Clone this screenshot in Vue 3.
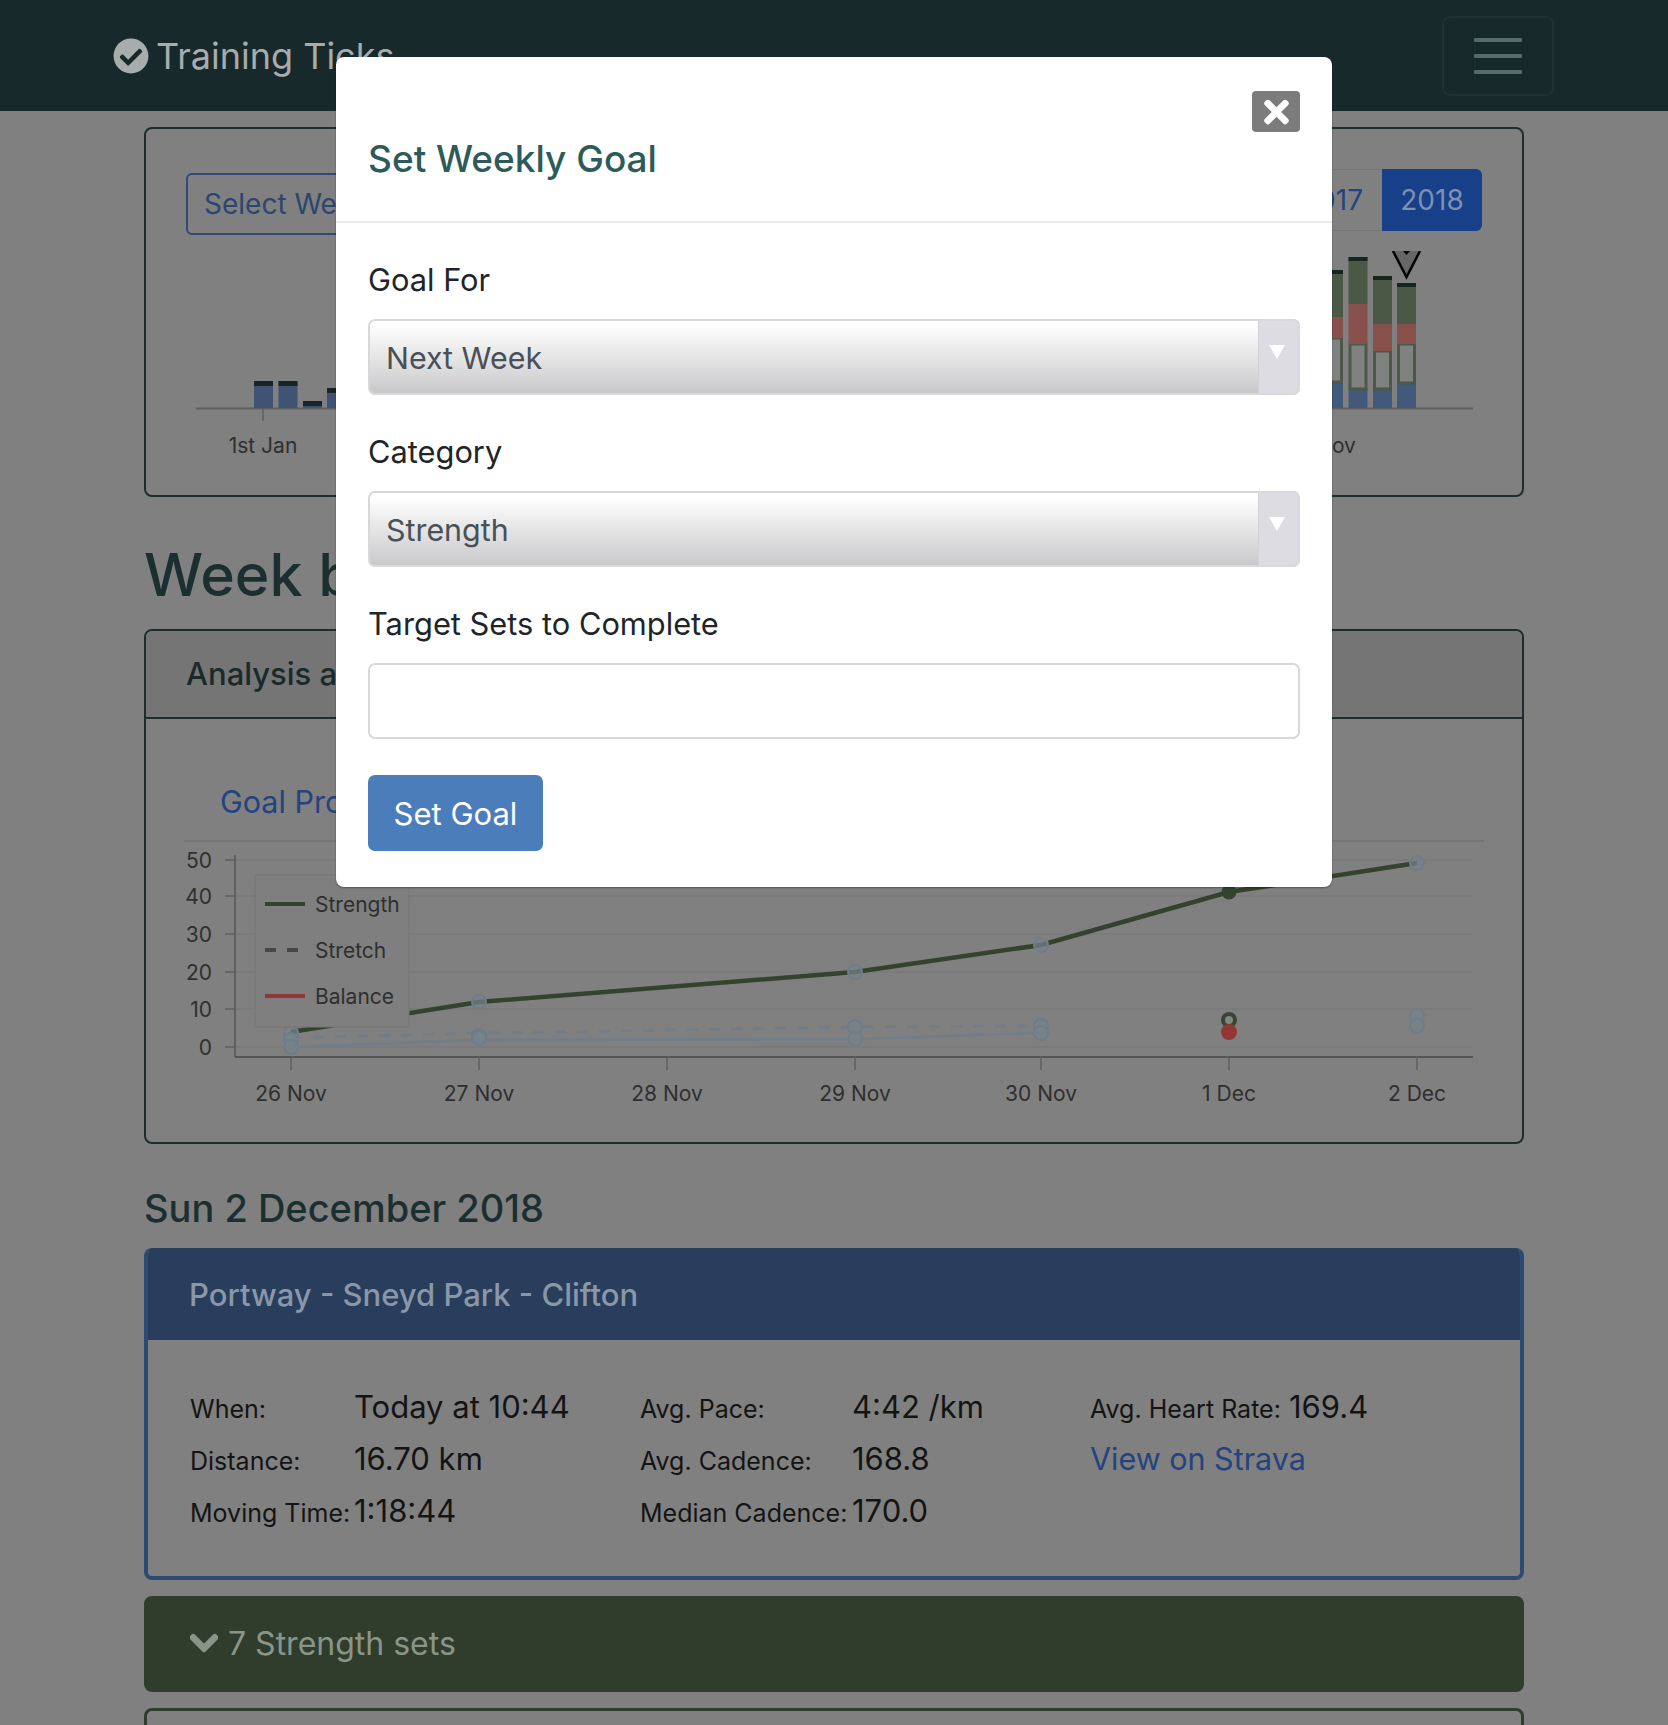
<script setup>
const legend = [
  { label: 'Strength', y: 904, color: '#33432d', dash: '' },
  { label: 'Stretch', y: 950, color: '#454a45', dash: '11 11' },
  { label: 'Balance', y: 996, color: '#923733', dash: '' }
]
const yTicks = [
  { label: '50', y: 860 }, { label: '40', y: 896 }, { label: '30', y: 934 },
  { label: '20', y: 972 }, { label: '10', y: 1009 }, { label: '0', y: 1047 }
]
const xTicks = [
  { label: '26 Nov', x: 291 }, { label: '27 Nov', x: 479 }, { label: '28 Nov', x: 667 },
  { label: '29 Nov', x: 855 }, { label: '30 Nov', x: 1041 }, { label: '1 Dec', x: 1229 }, { label: '2 Dec', x: 1417 }
]
const leftBars = [
  { x: 254, top: 380 }, { x: 278.5, top: 380 }, { x: 303, top: 400 }, { x: 327, top: 387 }
]
const rightBars = [
  { x: 1324, top: 269, g: 316, r: 337, w: 381 },
  { x: 1348.5, top: 256, g: 303, r: 343, w: 388 },
  { x: 1373, top: 275, g: 323, r: 350, w: 388 },
  { x: 1397, top: 282, g: 323, r: 343, w: 382 }
]
const faintDots = [
  [291, 1033], [291, 1040], [291, 1047], [479, 1002], [479, 1036], [479, 1038],
  [855, 972], [855, 1027], [855, 1039], [1041, 945], [1041, 1026], [1041, 1033],
  [1417, 863], [1417, 1016], [1417, 1026]
]
const stats = [
  { cols: '164px 1fr', rows: [['When:', 'Today at 10:44'], ['Distance:', '16.70 km'], ['Moving Time:', '1:18:44']] },
  { cols: '212px 1fr', rows: [['Avg. Pace:', '4:42 /km'], ['Avg. Cadence:', '168.8'], ['Median Cadence:', '170.0']] },
  { cols: '199px 1fr', rows: [['Avg. Heart Rate:', '169.4']], link: 'View on Strava' }
]
</script>

<template>
  <div class="page">
    <nav class="navbar">
      <div class="brand">
        <svg class="brand-icon" viewBox="0 0 512 512"><path fill="currentColor" d="M504 256c0 136.967-111.033 248-248 248S8 392.967 8 256 119.033 8 256 8s248 111.033 248 248zM227.314 387.314l184-184c6.248-6.248 6.248-16.379 0-22.627l-22.627-22.627c-6.248-6.249-16.379-6.249-22.628 0L216 308.118l-70.059-70.059c-6.248-6.248-16.379-6.248-22.628 0l-22.627 22.627c-6.248 6.248-6.248 16.379 0 22.627l104 104c6.249 6.249 16.379 6.249 22.628.001z"/></svg>
        <span>Training Ticks</span>
      </div>
      <div class="toggler"><i></i><i></i><i></i></div>
    </nav>

    <main class="main">
      <section class="card year-card">
        <div class="year-top">
          <div class="select-week">Select Week</div>
          <div class="years"><span class="year">2017</span><span class="year active">2018</span></div>
        </div>
        <svg class="year-chart" width="1376" height="240" viewBox="146 245 1376 240">
          <line x1="196" y1="407.5" x2="1473" y2="407.5" stroke="#5f5f5f" stroke-width="2"/>
          <line x1="263" y1="408" x2="263" y2="420" stroke="#5f5f5f" stroke-width="1.5"/>
          <g v-for="b in leftBars" :key="b.x">
            <rect :x="b.x" :y="b.top" width="19" :height="407 - b.top" fill="#405373"/>
            <rect :x="b.x" :y="b.top" width="19" height="5" fill="#182428"/>
          </g>
          <g v-for="b in rightBars" :key="b.x">
            <rect :x="b.x" :y="b.w" width="19" :height="407 - b.w" fill="#43597b"/>
            <rect :x="b.x + 1.5" :y="b.r" width="16" :height="b.w - b.r" fill="#7f827f" stroke="#4d574a" stroke-width="3"/>
            <rect :x="b.x" :y="b.g" width="19" :height="b.r - b.g" fill="#87504a"/>
            <rect :x="b.x" :y="b.top" width="19" :height="b.g - b.top" fill="#4a5845"/>
            <rect :x="b.x" :y="b.top" width="19" height="4" fill="#182420"/>
          </g>
          <path d="M1393 250 L1406.5 276 L1420 250" fill="#666" stroke="#000" stroke-width="2.5"/>
          <rect x="1388" y="245" width="38" height="5" fill="#808080"/>
          <path d="M1403 250 L1406.5 254 L1410 250Z" fill="#000"/>
          <text class="axis-text" x="263" y="452" text-anchor="middle">1st Jan</text>
          <text class="axis-text" x="1336" y="452" text-anchor="middle">Nov</text>
        </svg>
      </section>

      <h1 class="week-title">Week beginning</h1>

      <section class="card analysis">
        <header class="analysis-head">Analysis and Goals</header>
        <div class="tabs"><span class="tab">Goal Progress</span></div>
        <svg class="goal-chart" width="1376" height="270" viewBox="146 843 1376 270">
          <line v-for="t in yTicks" :key="t.y" x1="235" :y1="t.y" x2="1472" :y2="t.y" stroke="#7a7a7a" stroke-width="1.5"/>
          <line x1="235" y1="855" x2="235" y2="1057" stroke="#565656" stroke-width="1.5"/>
          <line x1="235" y1="1057" x2="1473" y2="1057" stroke="#565656" stroke-width="2"/>
          <g v-for="t in yTicks" :key="'y' + t.y">
            <line x1="225" :y1="t.y" x2="235" :y2="t.y" stroke="#5f5f5f" stroke-width="1.5"/>
            <text class="axis-text" x="212" :y="t.y + 8" text-anchor="end">{{ t.label }}</text>
          </g>
          <g v-for="t in xTicks" :key="t.x">
            <line :x1="t.x" y1="1057" :x2="t.x" y2="1070" stroke="#5f5f5f" stroke-width="1.5"/>
            <text class="axis-text" :x="t.x" y="1101" text-anchor="middle">{{ t.label }}</text>
          </g>
          <polyline points="291,1038 479,1033 855,1027 1041,1026" fill="none" stroke="#727d88" stroke-width="3" stroke-dasharray="11 11"/>
          <polyline points="291,1047 479,1040 855,1039 1041,1033" fill="none" stroke="#727d88" stroke-width="3"/>
          <polyline points="291,1032 479,1002 855,972 1041,945 1229,892 1417,863" fill="none" stroke="#33432d" stroke-width="4.5"/>
          <circle v-for="(d, i) in faintDots" :key="i" :cx="d[0]" :cy="d[1]" r="7" fill="#78838c" fill-opacity="0.7" stroke="#6f7d89" stroke-width="2"/>
          <circle cx="1229" cy="892" r="7.5" fill="#33432d"/>
          <circle cx="1229" cy="1020" r="6" fill="#808580" stroke="#3a4436" stroke-width="4"/>
          <circle cx="1229" cy="1032" r="8" fill="#923733"/>
          <rect x="255" y="875" width="154" height="152" fill="#7f7f7f" stroke="#777" stroke-width="1"/>
          <g v-for="l in legend" :key="l.label">
            <line x1="265" :y1="l.y" x2="305" :y2="l.y" :stroke="l.color" stroke-width="4" :stroke-dasharray="l.dash"/>
            <text class="axis-text" x="315" :y="l.y + 8">{{ l.label }}</text>
          </g>
        </svg>
      </section>

      <h2 class="day-title">Sun 2 December 2018</h2>

      <section class="activity">
        <header class="activity-head">Portway - Sneyd Park - Clifton</header>
        <div class="activity-body">
          <div v-for="(g, gi) in stats" :key="gi" class="stat-col" :style="{ gridTemplateColumns: g.cols }">
            <template v-for="r in g.rows" :key="r[0]">
              <span class="stat-label">{{ r[0] }}</span>
              <span class="stat-value">{{ r[1] }}</span>
            </template>
            <span v-if="g.link" class="stat-link">{{ g.link }}</span>
          </div>
        </div>
      </section>

      <section class="sets">
        <svg class="chevron" viewBox="0 0 448 512"><path fill="currentColor" stroke="currentColor" stroke-width="28" d="M207.029 381.476L12.686 187.132c-9.373-9.373-9.373-24.569 0-33.941l22.667-22.667c9.357-9.357 24.522-9.375 33.901-.04L224 284.505l154.745-154.021c9.379-9.335 24.544-9.317 33.901.04l22.667 22.667c9.373 9.373 9.373 24.569 0 33.941L240.971 381.476c-9.373 9.372-24.569 9.372-33.942 0z"/></svg>
        <span>7 Strength sets</span>
      </section>
      <section class="next-card"></section>
    </main>

    <div class="modal">
      <header class="modal-head">
        <button class="close" type="button" aria-label="Close">
          <svg viewBox="0 0 352 512"><path fill="currentColor" d="M242.72 256l100.07-100.07c12.28-12.28 12.28-32.19 0-44.48l-22.24-22.24c-12.28-12.28-32.19-12.28-44.48 0L176 189.28 75.93 89.21c-12.28-12.28-32.19-12.28-44.48 0L9.21 111.45c-12.28 12.28-12.28 32.19 0 44.48L109.28 256 9.21 356.07c-12.28 12.28-12.28 32.19 0 44.48l22.24 22.24c12.28 12.28 32.2 12.28 44.48 0L176 322.72l100.07 100.07c12.28 12.28 32.2 12.28 44.48 0l22.24-22.24c12.28-12.28 12.28-32.19 0-44.48L242.72 256z"/></svg>
        </button>
        <h5 class="modal-title">Set Weekly Goal</h5>
      </header>
      <form class="modal-body" @submit.prevent>
        <label class="field-label">Goal For</label>
        <div class="select-wrap">
          <select class="field select"><option>Next Week</option><option>This Week</option></select>
          <span class="select-arrow"><i></i></span>
        </div>
        <label class="field-label">Category</label>
        <div class="select-wrap">
          <select class="field select"><option>Strength</option><option>Stretch</option><option>Balance</option></select>
          <span class="select-arrow"><i></i></span>
        </div>
        <label class="field-label">Target Sets to Complete</label>
        <input class="field input" type="text" />
        <button class="submit" type="submit">Set Goal</button>
      </form>
    </div>
  </div>
</template>

<style>
html, body { margin: 0; padding: 0; background: #808080; }
</style>

<style scoped>
.page {
  position: relative;
  height: 1725px;
  overflow: hidden;
  background: #808080;
  color: #111;
  font-family: Inter, "Liberation Sans", sans-serif;
  font-size: 30px;
}
.navbar {
  height: 111px;
  background: #18292b;
  display: flex;
  align-items: center;
  justify-content: space-between;
  padding: 0 114px 0 113px;
  box-sizing: border-box;
}
.brand { display: flex; align-items: center; gap: 7px; color: #a7acac; font-size: 36px; }
.brand-icon { width: 36px; height: 36px; display: block; }
.toggler {
  width: 112px; height: 80px; box-sizing: border-box;
  border: 2px solid #1f3133; border-radius: 8px;
  display: flex; flex-direction: column; align-items: center; justify-content: center; gap: 12px;
}
.toggler i { display: block; width: 48px; height: 4px; background: #566a6b; border-radius: 1px; }
.main { padding: 16px 144px 0; }
.card { border: 2px solid #1e2c2d; border-radius: 8px; box-sizing: border-box; }
.year-card { height: 370px; padding: 40px 40px 0; }
.year-top { display: flex; justify-content: space-between; align-items: flex-start; }
.select-week {
  margin-top: 4px; width: 200px; height: 62px; box-sizing: border-box; padding: 0 16px;
  border: 2px solid #2f4a73; border-radius: 6px; color: #2c4670; line-height: 58px; font-size: 28px; white-space: nowrap;
}
.years { display: flex; height: 62px; }
.year { width: 100px; line-height: 60px; text-align: center; color: #234481; font-size: 28px; border: 1px solid #767676; border-width: 1px 0; box-sizing: border-box; }
.year.active { background: #174089; color: #7c90b3; border: 0; line-height: 62px; border-radius: 0 6px 6px 0; }
.year-chart { display: block; margin: 11px 0 0 -40px; }
.axis-text { font-size: 21px; fill: #2f2f2f; font-family: Inter, "Liberation Sans", sans-serif; }
.week-title {
  margin: 37px 0 0; height: 95px; line-height: 82px; font-size: 59px; font-weight: 500; color: #1c2f30; white-space: nowrap;
}
.analysis { height: 515px; overflow: hidden; }
.analysis-head { height: 86px; line-height: 86px; padding-left: 40px; background: #757575; border-bottom: 2px solid #1e2c2d; font-size: 31px; font-weight: 500; color: #1a2a2b; }
.tabs { margin: 0 38px; height: 123px; border-bottom: 2px solid #757575; box-sizing: border-box; padding: 58px 0 0 36px; }
.tab { color: #234481; font-size: 30.5px; line-height: 50px; }
.goal-chart { display: block; margin-top: 1px; }
.day-title { margin: 39px 0 0; height: 65px; line-height: 50px; font-size: 38px; font-weight: 500; color: #1c2f30; }
.activity { border: 4px solid #2d4a75; border-top: 0; border-radius: 8px; box-sizing: border-box; height: 332px; overflow: hidden; }
.activity-head { height: 92px; margin: 0 -4px; line-height: 94px; padding-left: 45px; background: #283e5c; color: #8a97a8; font-size: 31px; font-weight: 500; }
.activity-body { display: grid; grid-template-columns: 450px 450px 1fr; padding: 48px 0 0 42px; }
.stat-col { display: grid; grid-auto-rows: 52px; align-items: baseline; align-content: start; }
.stat-label { font-size: 25px; color: #141414; white-space: nowrap; }
.stat-value { font-size: 31px; color: #141414; white-space: nowrap; }
.stat-link { grid-column: 1 / -1; font-size: 30.5px; color: #234481; }
.sets {
  margin-top: 16px; height: 96px; border-radius: 8px; background: #303d2d; color: #8a958a;
  display: flex; align-items: center; gap: 9px; padding: 0 0 2px 45px; box-sizing: border-box; font-size: 32px;
}
.chevron { width: 28px; height: 32px; display: block; margin-left: 1px; margin-right: 1px; }
.next-card { margin-top: 16px; height: 100px; border: 3px solid #2b3f2a; border-radius: 8px; }
.modal {
  position: absolute; left: 336px; top: 57px; width: 996px; height: 830px;
  background: #fff; border-radius: 8px; box-shadow: 0 1px 2px rgba(0, 0, 0, .35);
}
.modal-head { height: 166px; box-sizing: border-box; border-bottom: 2px solid #e9ecef; padding: 34px 32px 0; display: flex; flex-direction: column; align-items: flex-start; }
.close {
  align-self: flex-end; width: 48px; height: 41px; padding: 0; border: 0; border-radius: 4px;
  background: #7c7c7c; color: #fff; display: flex; align-items: center; justify-content: center;
}
.close svg { width: 25px; height: 36px; display: block; }
.modal-title { margin: 5px 0 0; font-size: 37px; line-height: 44px; font-weight: 500; color: #2d5a5a; }
.modal-body { padding: 35px 32px 0; display: flex; flex-direction: column; align-items: flex-start; }
.field-label { display: block; height: 61px; line-height: 44px; font-size: 30.8px; color: #212529; }
.select-wrap { position: relative; width: 932px; height: 76px; margin-bottom: 35px; }
.field { display: block; box-sizing: border-box; width: 932px; height: 76px; border: 2px solid #d8d8d8; border-radius: 7px; font-family: inherit; font-size: 30.4px; color: #495057; }
.select {
  appearance: none; -webkit-appearance: none; padding: 2px 60px 0 16px;
  background: linear-gradient(#fff 5%, #c9c9cb 100%);
}
.select-arrow {
  position: absolute; right: 0; top: 0; width: 42px; height: 76px; background: #dcdce2;
  border-radius: 0 7px 7px 0; border: 2px solid #d9d9dd; border-left: 1px solid #d2d2d8; box-sizing: border-box;
}
.select-arrow i {
  position: absolute; left: 10px; top: 24px; width: 0; height: 0;
  border-left: 8px solid transparent; border-right: 8px solid transparent; border-top: 14px solid #fff;
}
.input { background: #fff; margin-bottom: 36px; }
.submit {
  width: 175px; height: 76px; border: 0; border-radius: 7px; background: #4c7dbb; color: #fff;
  font-family: inherit; font-size: 31px; padding: 0;
}
</style>
